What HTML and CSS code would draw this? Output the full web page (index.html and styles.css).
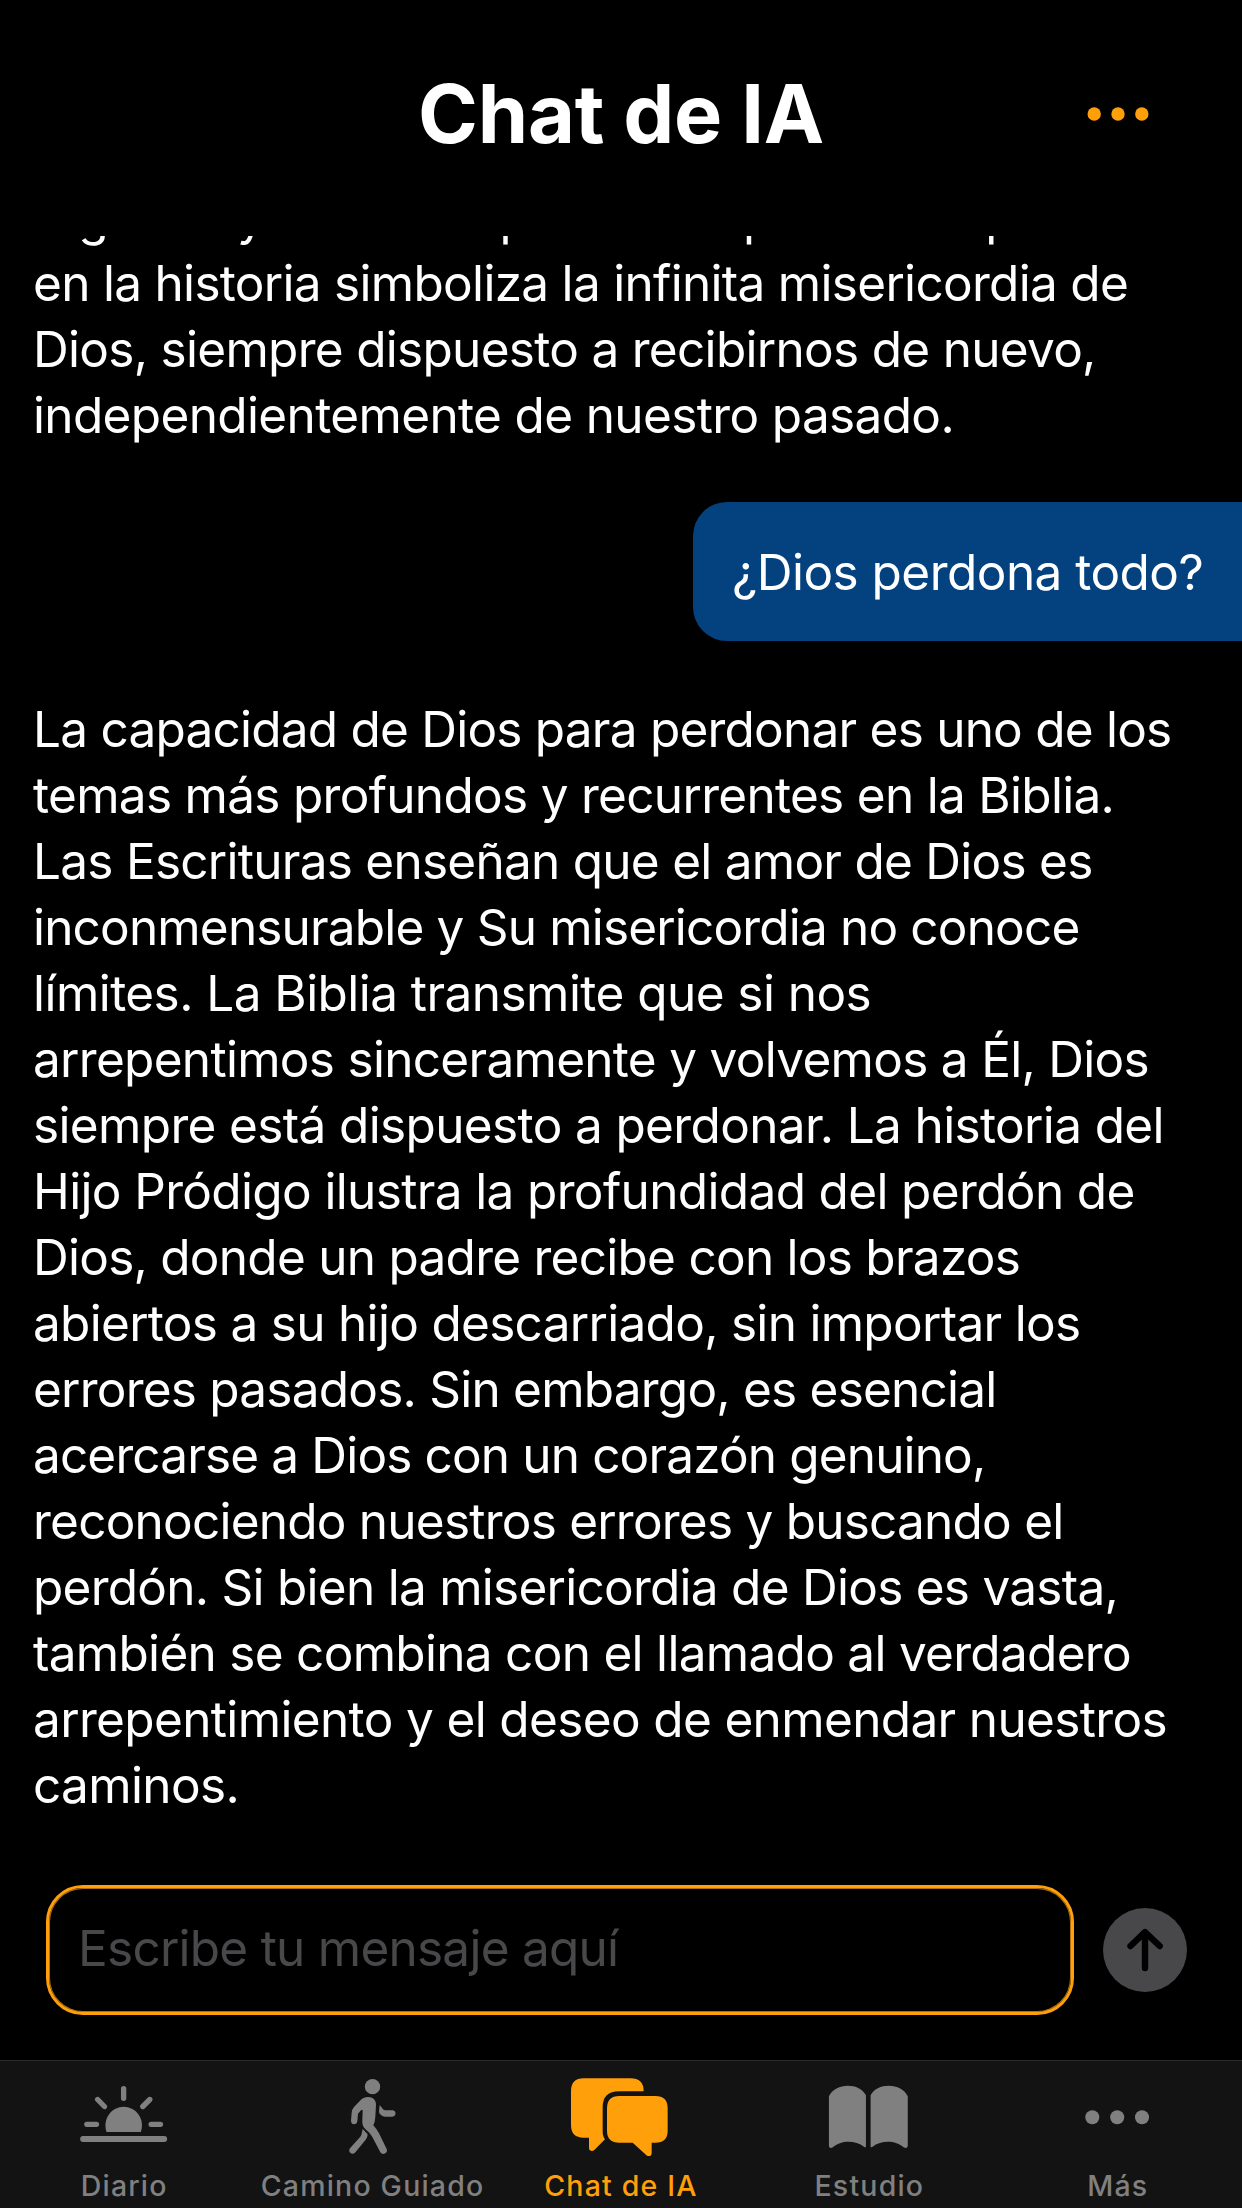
FILE: index.html
```html
<!DOCTYPE html>
<html lang="es">
<head>
<meta charset="utf-8">
<title>Chat de IA</title>
<link rel="stylesheet" href="styles.css">
</head>
<body>
<div class="app">
  <header class="header">
    <h1 class="title">Chat de IA</h1>
    <button class="more" aria-label="Opciones">
      <svg width="64" height="20" viewBox="0 0 64 20" fill="currentColor"><circle cx="8.2" cy="10" r="6.7"/><circle cx="32" cy="10" r="6.7"/><circle cx="55.8" cy="10" r="6.7"/></svg>
    </button>
  </header>

  <main class="chat">
    <p class="answer previous">
      <span>regresar y lo abraza para darle perdón. El padre</span>
      <span>en la historia simboliza la infinita misericordia de</span>
      <span>Dios, siempre dispuesto a recibirnos de nuevo,</span>
      <span>independientemente de nuestro pasado.</span>
    </p>
    <p class="question">¿Dios perdona todo?</p>
    <p class="answer current">
      <span>La capacidad de Dios para perdonar es uno de los</span>
      <span>temas más profundos y recurrentes en la Biblia.</span>
      <span>Las Escrituras enseñan que el amor de Dios es</span>
      <span>inconmensurable y Su misericordia no conoce</span>
      <span>límites. La Biblia transmite que si nos</span>
      <span>arrepentimos sinceramente y volvemos a Él, Dios</span>
      <span>siempre está dispuesto a perdonar. La historia del</span>
      <span>Hijo Pródigo ilustra la profundidad del perdón de</span>
      <span>Dios, donde un padre recibe con los brazos</span>
      <span>abiertos a su hijo descarriado, sin importar los</span>
      <span>errores pasados. Sin embargo, es esencial</span>
      <span>acercarse a Dios con un corazón genuino,</span>
      <span>reconociendo nuestros errores y buscando el</span>
      <span>perdón. Si bien la misericordia de Dios es vasta,</span>
      <span>también se combina con el llamado al verdadero</span>
      <span>arrepentimiento y el deseo de enmendar nuestros</span>
      <span>caminos.</span>
    </p>
  </main>

  <div class="composer">
    <div class="field">Escribe tu mensaje aquí</div>
    <button class="send" aria-label="Enviar">
      <svg width="84" height="84" viewBox="0 0 84 84" fill="none" stroke="#000" stroke-width="6.4" stroke-linecap="round" stroke-linejoin="round"><path d="M42 60V24.5M27.5 38 42 24l14.7 14"/></svg>
    </button>
  </div>

  <nav class="tabs">
    <a class="tab">
      <svg class="icon" viewBox="221.6 72 300 258" fill="currentColor">
        <path d="M319 246C306 205 336 170.500 370.500 170.500S436 205 422 246Z"/>
        <g stroke="currentColor" stroke-width="16" stroke-linecap="round"><path d="M370.500 116V145M292.500 148.500 313 169.500M449 148.500 428 169.500M260 223H289M453 223H481"/><path stroke-width="18" d="M249 267H492"/></g>
      </svg>
      <span>Diario</span>
    </a>
    <a class="tab">
      <svg class="icon" viewBox="968 72 300 258" fill="currentColor">
        <circle cx="1116.500" cy="110" r="23"/>
        <path d="M1103 141C1118 141 1127 150 1127 164L1125 200Q1124 216 1119 226Q1129 237 1136 250L1159 297C1164 308 1148 318 1140 307L1116 261Q1109 248 1098 240Q1084 229 1086 210L1087 181Q1085 178 1082 181L1073 191L1071 213C1070 226 1052 226 1052 212L1054 188Q1055 178 1061 171L1079 152Q1089 141 1103 141Z"/>
        <path d="M1138 165L1148 178Q1151 181 1156 181H1176C1189 181 1189 200 1176 200H1154Q1147 200 1142 195Q1136 190 1136 185Z"/>
        <path d="M1087 237L1102 253Q1102 262 1096 269L1064 308C1056 317 1041 306 1049 295L1080 260Q1084 255 1085 247Z"/>
      </svg>
      <span>Camino Guiado</span>
    </a>
    <a class="tab active">
      <svg class="icon" viewBox="33 12 300 258" fill="currentColor">
        <path d="M71 25H211Q251 25 251 64H177Q128 64 128 112V184Q128 200 135 208L103 240Q96 246 90 241Q87 239 87 233V203H71Q33 203 33 165V63Q33 25 71 25Z"/>
        <path d="M178 78H286Q323 78 323 115V182Q323 218 286 218H275V248Q275 262 261 257L218 218H178Q141 218 141 182V115Q141 78 178 78Z"/>
      </svg>
      <span>Chat de IA</span>
    </a>
    <a class="tab">
      <svg class="icon" viewBox="777.2 12 300 258" fill="currentColor">
        <path d="M807 79C825 37 900 37 918 76V230Q915 234 910 229C887 210 841 210 819 232Q809 237 807 229Z"/>
        <path d="M1043.500 79C1026 37 950 37 932 76V230Q935 234 940 229C963 210 1009 210 1031 232Q1041 237 1043.500 229Z"/>
      </svg>
      <span>Estudio</span>
    </a>
    <a class="tab">
      <svg class="icon" viewBox="0 0 100 86" fill="currentColor"><circle cx="24.300" cy="43.200" r="7"/><circle cx="49.200" cy="43.200" r="7"/><circle cx="74" cy="43.200" r="7"/></svg>
      <span>Más</span>
    </a>
  </nav>
</div>
</body>
</html>
```
FILE: styles.css
```css
* { box-sizing: border-box; }

body {
  margin: 0;
  background: #000;
  color: #fff;
  font-family: Inter, "Liberation Sans", sans-serif;
}

h1, p { margin: 0; }

button {
  padding: 0;
  border: 0;
  background: none;
  color: inherit;
}

svg { display: block; }

.app {
  display: flex;
  flex-direction: column;
  width: 1242px;
  height: 2208px;
  overflow: hidden;
}

.header {
  display: grid;
  grid-template-columns: 1fr auto 1fr;
  align-items: center;
  flex: none;
  height: 236px;
  padding: 0 92px 9px;
}

.title {
  grid-column: 2;
  font-size: 81px;
  line-height: 98px;
  font-weight: 700;
  letter-spacing: -0.2px;
}

.more {
  justify-self: end;
  color: #ff9f0a;
}

.chat {
  flex: none;
  display: flex;
  flex-direction: column;
  height: 1649px;
  overflow: hidden;
  font-size: 49.5px;
  line-height: 66px;
  white-space: nowrap;
}

.answer {
  padding-left: 33px;
  letter-spacing: -0.7px;
}

.answer span { display: block; }

/* The log is scrolled, so the first line sits mostly under the header. */
.previous { margin-top: -52px; }

.previous span:nth-child(4),
.current span:nth-child(7),
.current span:nth-child(8),
.current span:nth-child(16),
.current span:nth-child(17) { letter-spacing: -0.64px; }

.current span:nth-child(5) { letter-spacing: -0.55px; }

.current span:nth-child(3),
.current span:nth-child(9),
.current span:nth-child(14) { letter-spacing: -0.735px; }

.current span:nth-child(1),
.current span:nth-child(11),
.current span:nth-child(13) { letter-spacing: -0.77px; }

.current span:nth-child(4) { letter-spacing: -0.825px; }
.current span:nth-child(12) { letter-spacing: -0.85px; }

.question {
  align-self: flex-end;
  width: 549px;
  margin: 54px 0 55px;
  padding: 37px 0 36px 39px;
  border-radius: 34px 0 0 34px;
  background: #04427f;
  letter-spacing: -0.53px;
}

.composer {
  display: flex;
  align-items: center;
  gap: 29px;
  flex: none;
  height: 130px;
  margin-bottom: 45px;
  padding-left: 46px;
}

.field {
  width: 1028px;
  height: 130px;
  padding: 27px 0 0 29px;
  border: 3px solid #ff9f0a;
  border-radius: 37px;
  box-shadow: inset 0 0 0 1px rgba(255, 159, 10, 0.7);
  color: #48484a;
  font-size: 49.5px;
  line-height: 66px;
  letter-spacing: -0.75px;
}

.send {
  width: 84px;
  height: 84px;
  border-radius: 50%;
  background: #48484a;
}

.tabs {
  display: grid;
  grid-template-columns: repeat(5, 1fr);
  flex: 1;
  border-top: 1px solid #2b2b2b;
  background: #131313;
  color: #808080;
}

.tab {
  display: flex;
  flex-direction: column;
  align-items: center;
  gap: 8px;
  padding-top: 13px;
  font-size: 28.5px;
  line-height: 36px;
  font-weight: 500;
  letter-spacing: 1.2px;
  white-space: nowrap;
}

.icon {
  width: 100px;
  height: 86px;
}

.active { color: #ff9f0a; }
```
